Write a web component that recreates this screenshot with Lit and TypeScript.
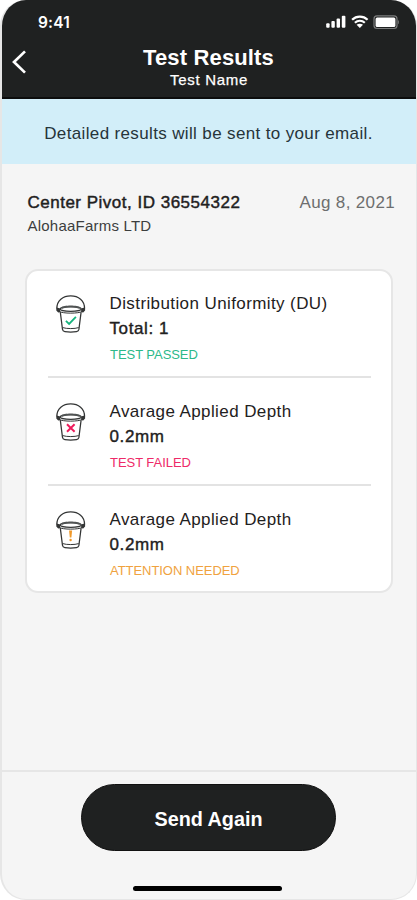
import { LitElement, html, css, svg } from "lit";
import { customElement, property } from "lit/decorators.js";

type Status = "passed" | "failed" | "attention";

interface Result {
  title: string;
  value: string;
  status: Status;
  label: string;
}

const results: Result[] = [
  { title: "Distribution Uniformity (DU)", value: "Total: 1", status: "passed", label: "TEST PASSED" },
  { title: "Avarage Applied Depth", value: "0.2mm", status: "failed", label: "TEST FAILED" },
  { title: "Avarage Applied Depth", value: "0.2mm", status: "attention", label: "ATTENTION NEEDED" },
];

const marks = {
  passed: svg`<path d="M10.9 26.8l3.2 3.1 6.8-7" fill="none" stroke="#14b37d" stroke-width="1.8"/>`,
  failed: svg`<path d="M12 22.3l7.6 7.4M19.6 22.3l-7.6 7.4" fill="none" stroke="#ee1c5c" stroke-width="2"/>`,
  attention: svg`<path d="M14.1 20.6h3l-.7 7h-1.600z" fill="#f0992a"/><circle cx="15.6" cy="30" r="1.2" fill="#f0992a"/>`,
};

@customElement("bucket-icon")
export class BucketIcon extends LitElement {
  @property() status: Status = "passed";

  static styles = css`
    :host { display: block; width: 32px; height: 40px; }
    .icon { display: block; }
  `;

  render() {
    return html`<svg class="icon" width="32" height="40" viewBox="0 0 32 40">
      <g fill="none" stroke="#333535" stroke-width="1.25" stroke-linejoin="round">
        <path d="M1.9 14.5C1.7 6.6 8 1.9 15.7 1.9S29.7 6.6 29.5 14.5"/>
        <ellipse cx="15.7" cy="15" rx="10.6" ry="2.4"/>
        <path d="M4.6 14.6v2.8c2 2.3 20.2 2.3 22.2 0v-2.8" stroke-width="1"/>
        <path d="M5.3 18.2l2.2 17.2c.2 1.3 1 2 2.4 2.2 3.4.5 8.2.5 11.6 0 1.4-.2 2.2-.9 2.4-2.2l2.2-17.2"/>
        <path d="M7.7 33.6c4 1.3 12 1.3 16 0" stroke-width="1"/>
      </g>
      <path d="M5.6 13.8c3-3 17.2-3 20.2 0l-1.5 1c-4-1.6-13.2-1.6-17.2 0z" fill="#505353"/>
      <path d="M1.3 13.6l3.3.6.5 4-1.9.4-1.9-2.2zM30.100 13.6l-3.3.6-.5 4 1.9.4 1.9-2.2z" fill="#333535"/>
      ${marks[this.status]}
    </svg>`;
  }
}

@customElement("app-root")
export class AppRoot extends LitElement {
  static styles = css`
    :host {
      display: block;
      width: 417px;
      height: 900px;
      background: #fff;
      font-family: "Liberation Sans", Arial, sans-serif;
      color: #1f2121;
    }
    * { box-sizing: border-box; }
    .screen {
      display: flex;
      flex-direction: column;
      height: 900px;
      border-radius: 26px;
      overflow: hidden;
      background: #f5f5f5;
      border: solid #e6e6e6;
      border-width: 0 1px 1px 2px;
    }
    .header {
      height: 99px;
      flex: none;
      background: #1f2121;
      border-bottom: 2px solid #0c0d0d;
      color: #fff;
      margin: 0 -1px 0 -2px;
    }
    .statusbar {
      display: flex;
      justify-content: space-between;
      align-items: center;
      height: 44px;
      padding: 0 18px 0 38px;
    }
    .time {
      font: 600 15.5px/20px Inter, "Liberation Sans", sans-serif;
      letter-spacing: 0.15px;
      padding-top: 2px;
    }
    .indicators { display: block; }
    .titlebar {
      display: grid;
      grid-template-columns: 60px 1fr 60px;
      height: 53px;
    }
    .back { display: block; margin: 4px 0 0 10px; }
    .titles { text-align: center; padding-top: 1px; }
    .title { font-size: 22px; line-height: 26px; font-weight: 700; letter-spacing: 0.15px; }
    .subtitle {
      font-size: 15px;
      line-height: 17px;
      letter-spacing: 0.7px;
      padding-left: 1px;
      -webkit-text-stroke: 0.25px;
    }
    .banner {
      flex: none;
      height: 65px;
      display: flex;
      align-items: center;
      justify-content: center;
      background: #d2eef9;
      font-size: 17px;
      letter-spacing: 0.36px;
      color: #26343a;
      padding: 4px 1px 0 0;
    }
    .info {
      display: flex;
      justify-content: space-between;
      padding: 26px 21px 0 25.5px;
    }
    .name {
      font-size: 17px;
      line-height: 26px;
      letter-spacing: 0.5px;
      -webkit-text-stroke: 0.45px;
    }
    .farm { font-size: 15px; line-height: 20px; letter-spacing: 0.22px; color: #3c3e3e; }
    .date { font-size: 17px; line-height: 26px; letter-spacing: 0.35px; color: #6d6e6e; }
    .card {
      margin: 33px 23px 0;
      height: 324px;
      background: #fff;
      border: 2px solid #e6e6e6;
      border-radius: 13px;
      padding: 0 20px 0 21px;
    }
    .row {
      display: flex;
      height: 108px;
      padding-top: 21px;
      border-bottom: 2px solid #e3e3e3;
    }
    .row:first-child { height: 107px; padding-top: 20px; }
    .row:last-child { border-bottom: 0; }
    .bucket { margin: 3px 22.5px 0 7px; }
    .heading { font-size: 17px; line-height: 25px; letter-spacing: 0.4px; }
    .value {
      font-size: 17px;
      line-height: 25px;
      letter-spacing: 0.6px;
      -webkit-text-stroke: 0.4px;
    }
    .label { font-size: 13px; line-height: 27px; letter-spacing: -0.05px; padding-left: 0.5px; }
    .passed { color: #2cb98a; }
    .failed { color: #ee2a68; }
    .attention { color: #f0a23e; }
    .footer {
      margin-top: auto;
      flex: none;
      height: 129px;
      border-top: 2px solid #e6e6e6;
      display: flex;
      flex-direction: column;
      align-items: center;
      padding: 12px 3px 0 0;
    }
    .send {
      width: 255px;
      height: 67px;
      margin-left: 2px;
      border: 1px solid #111;
      border-radius: 34px;
      background: #1f2121;
      color: #fff;
      font: 700 19.8px "Liberation Sans", Arial, sans-serif;
      padding: 3px 0 0;
    }
    .home { width: 149px; height: 5px; border-radius: 3px; background: #000; margin-top: 35px; }
  `;

  render() {
    return html`
      <div class="screen">
        <div class="header">
          <div class="statusbar">
            <span class="time">9:41</span>
            <svg class="indicators" width="78" height="16" viewBox="321 13.5 78 16">
              <g fill="#fff">
                <rect x="326.2" y="22.8" width="3.4" height="4.4" rx="1"/>
                <rect x="331.4" y="20.6" width="3.4" height="6.6" rx="1"/>
                <rect x="336.6" y="18" width="3.4" height="9.2" rx="1"/>
                <rect x="341.8" y="15.2" width="3.6" height="12" rx="1"/>
                <path d="M356.6 24.3c1.7-1.5 4.7-1.5 6.4 0l-3.2 3.2z"/>
                <rect x="375.6" y="17" width="19.8" height="9.4" rx="1.5"/>
              </g>
              <g fill="none" stroke="#fff" stroke-width="2.2">
                <path d="M352.1 19.3c4.4-4.2 11.1-4.2 15.5 0"/>
                <path d="M354.9 22.3c2.8-2.7 7.1-2.7 9.9 0"/>
              </g>
              <rect x="374" y="15.4" width="23" height="12.6" rx="3" fill="none" stroke="#7b7c7c" stroke-width="1.2"/>
              <path d="M398.2 19.7c1.4.6 1.4 3.3 0 3.9z" fill="#7b7c7c"/>
            </svg>
          </div>
          <div class="titlebar">
            <svg class="back" width="20" height="28" viewBox="0 0 20 28">
              <path d="M15 3.4L4 14l11 10.600" fill="none" stroke="#fff" stroke-width="2.7"/>
            </svg>
            <div class="titles">
              <div class="title">Test Results</div>
              <div class="subtitle">Test Name</div>
            </div>
          </div>
        </div>
        <div class="banner">Detailed results will be sent to your email.</div>
        <div class="info">
          <div>
            <div class="name">Center Pivot, ID 36554322</div>
            <div class="farm">AlohaaFarms LTD</div>
          </div>
          <div class="date">Aug 8, 2021</div>
        </div>
        <div class="card">
          ${results.map(
            (r) => html`<div class="row">
              <bucket-icon class="bucket" status=${r.status}></bucket-icon>
              <div>
                <div class="heading">${r.title}</div>
                <div class="value">${r.value}</div>
                <div class="label ${r.status}">${r.label}</div>
              </div>
            </div>`
          )}
        </div>
        <div class="footer">
          <button class="send">Send Again</button>
          <div class="home"></div>
        </div>
      </div>
    `;
  }
}
